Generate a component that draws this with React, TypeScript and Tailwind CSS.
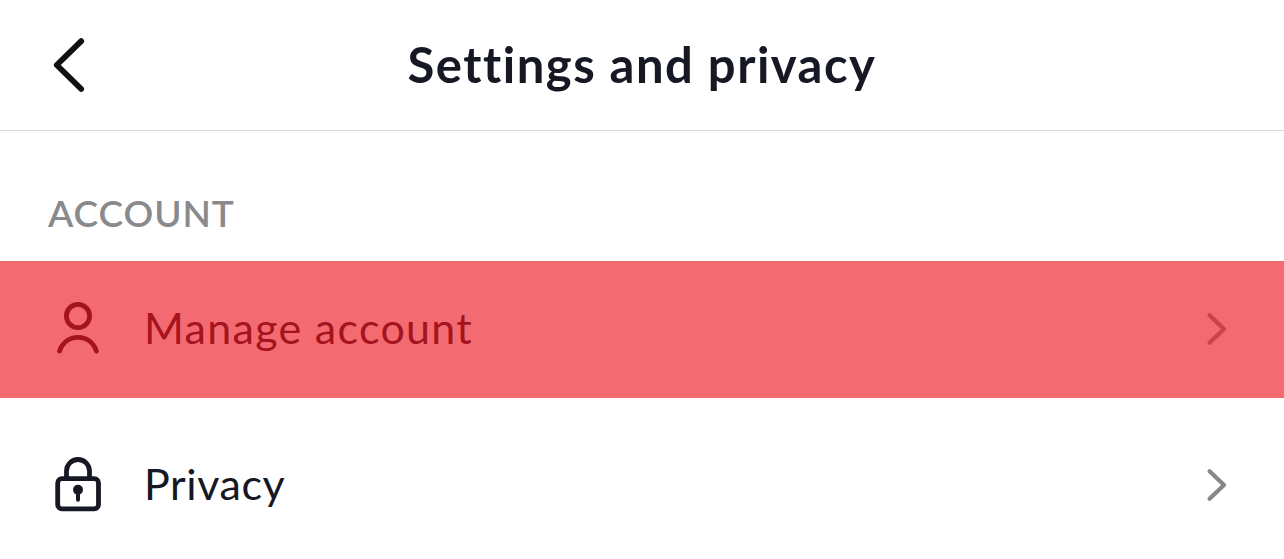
import type { ReactNode } from "react";

function BackIcon() {
  return (
    <svg className="h-16 w-10" viewBox="0 0 40 64" fill="none" stroke="currentColor" strokeWidth="5.8" strokeLinecap="round" strokeLinejoin="round">
      <path d="M33.2 8.2 8.8 32l24.4 24" />
    </svg>
  );
}

function PersonIcon() {
  return (
    <svg className="h-16 w-15" viewBox="0 0 60 64" fill="none" stroke="currentColor" strokeWidth="4.8" strokeLinecap="round">
      <circle cx="30" cy="19" r="11.6" />
      <path d="M11.6 54C14.6 45.5 21.6 40.4 30 40.4S45.4 45.5 48.4 54" />
    </svg>
  );
}

function LockIcon() {
  return (
    <svg className="h-16 w-15" viewBox="0 0 60 64" fill="none" stroke="currentColor" strokeWidth="4.8">
      <path d="M18.5 25.5V18a11.5 11.5 0 0 1 23 0v7.5" />
      <rect x="9.7" y="25.7" width="40.8" height="30.2" rx="4.2" />
      <circle cx="30" cy="36.8" r="5" fill="currentColor" stroke="none" />
      <path d="M30 38v8.8" strokeWidth="4" strokeLinecap="round" />
    </svg>
  );
}

function ChevronIcon({ className }: { className: string }) {
  return (
    <svg className={`h-9 w-6 ${className}`} viewBox="0 0 24 36" fill="none" stroke="currentColor" strokeWidth="4.2" strokeLinecap="round" strokeLinejoin="round">
      <path d="M4.6 4.2 19 18 4.6 31.8" />
    </svg>
  );
}

function Row(props: { icon: ReactNode; title: string; className: string; titleClass: string; chevronClass: string }) {
  return (
    <button className={`flex w-full items-center pr-[55px] pl-12 text-left ${props.className}`}>
      {props.icon}
      <span className={`ml-9 flex-1 pb-0.5 leading-[52px] ${props.titleClass}`}>{props.title}</span>
      <ChevronIcon className={props.chevronClass} />
    </button>
  );
}

function App() {
  return (
    <div className="h-[559px] w-full overflow-hidden bg-white font-['Lato','Liberation_Sans',sans-serif] text-[#161823]">
      <header className="grid h-[131px] grid-cols-[100px_1fr_100px] items-center border-b border-[#d8d8d8]">
        <button className="pl-12 text-[#111]">
          <BackIcon />
        </button>
        <h1 className="pb-[3px] text-center text-[49px] leading-[60px] font-bold tracking-[1.5px] whitespace-nowrap">Settings and privacy</h1>
      </header>
      <h2 className="h-[130px] pt-[59px] pl-12 text-[37px] leading-[46px] font-semibold tracking-[0.9px] text-[#8a8a8d]">ACCOUNT</h2>
      <Row
        icon={<PersonIcon />}
        title="Manage account"
        className="h-[137px] border-t border-[#e06a70] bg-[#f46a71] pb-0.5 text-[#a5141e]"
        titleClass="text-[43px] tracking-[1.3px]"
        chevronClass="text-[#cf414a]"
      />
      <Row
        icon={<LockIcon />}
        title="Privacy"
        className="h-[174px]"
        titleClass="text-[43px] tracking-[0.6px]"
        chevronClass="text-[#88888b]"
      />
    </div>
  );
}

export default App;
